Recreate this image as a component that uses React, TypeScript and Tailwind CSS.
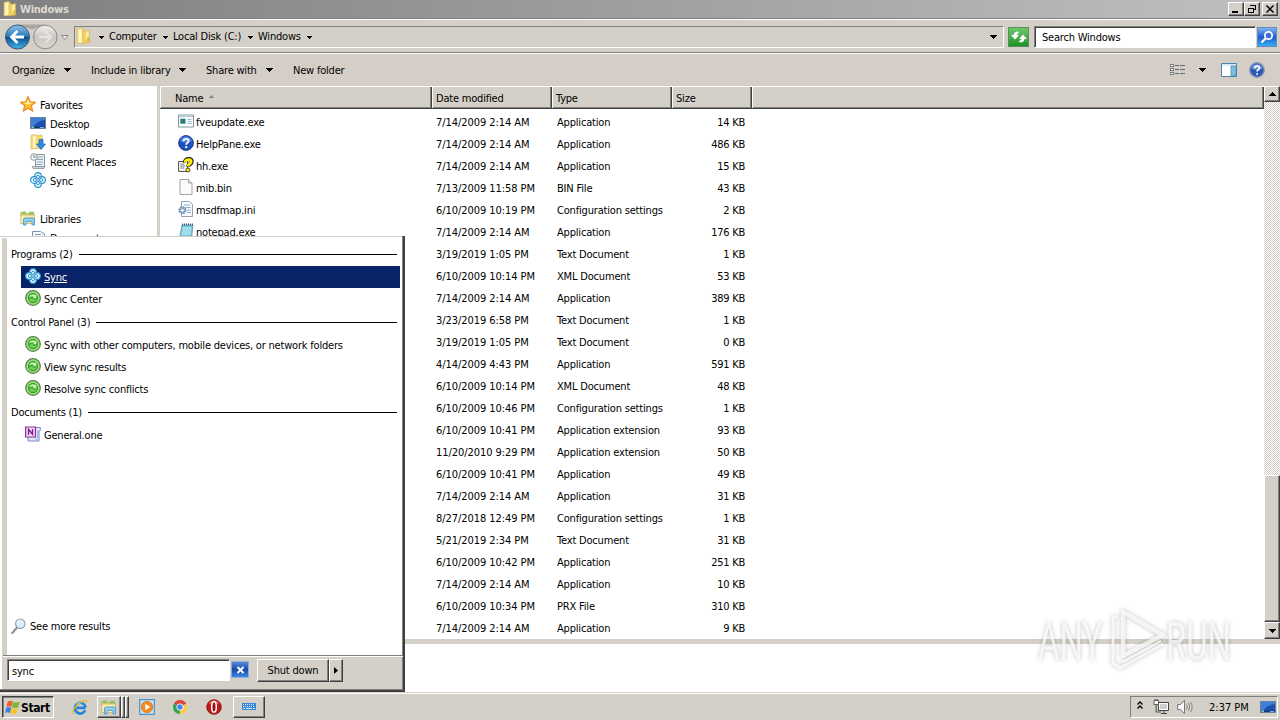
import React from 'react';
import clsx from 'clsx';

type IconProps = { className?: string };

const RAISED = 'border border-t-white border-l-white border-b-[#404040] border-r-[#404040] bg-[#d4d0c8] shadow-[inset_-1px_-1px_0_#808080]';
const SUNKEN = 'border border-t-[#808080] border-l-[#808080] border-b-white border-r-white';

const Caret = ({ className }: IconProps) => (
  <svg viewBox="0 0 7 4" className={clsx('shrink-0', className)} shapeRendering="crispEdges"><path d="M0 0h7L3.5 4z" fill="#000" /></svg>
);

const FolderIcon = ({ className }: IconProps) => (
  <svg viewBox="0 0 16 16" className={clsx('shrink-0', className)}>
    <path d="M2 1.500 6 .5l2 1V14l-6 1z" fill="#f7e38c" stroke="#d8b458" strokeWidth=".6" />
    <path d="M6.500 2.500h2.500l1 1 3.500-1V14l-7 1z" fill="#f0cf62" stroke="#d8b458" strokeWidth=".6" />
    <path d="M3.500 2v12.500l3-.5V1.500z" fill="#fff6c0" />
    <path d="m10 4 3-.5v7l-3 1z" fill="#fbeb9f" />
    <path d="M11.500 9h2.300v5h-2.300z" fill="#e3ba48" />
  </svg>
);

const StarIcon = ({ className }: IconProps) => (
  <svg viewBox="0 0 16 16" className={className}>
    <path d="m8 .8 2.100 4.900 5.300.5-4 3.500 1.200 5.300L8 12.200 3.400 15l1.200-5.300-4-3.500 5.300-.5z" fill="#ffc034" stroke="#e6861c" strokeWidth="1.100" />
    <path d="m8 3 1.300 3.500 3.500.4-4.800 1.600-4.500-1.600 3.200-.4z" fill="#ffec98" />
  </svg>
);

const DesktopIcon = ({ className }: IconProps) => (
  <svg viewBox="0 0 16 16" className={className}>
    <path d="M.5 2.500h15v11H.5z" fill="#1e4fae" stroke="#6a80a0" />
    <path d="M1 3h14v2Q7 6 3 12H1z" fill="#3f7fd8" />
    <path d="M1 11.500h14V13H1z" fill="#143878" />
    <path d="M1.500 11.500h2.500V13H1.500z" fill="#8fd0a0" />
    <path d="M10 12h4v.8h-4z" fill="#a8c8f0" />
  </svg>
);

const DownloadsIcon = ({ className }: IconProps) => (
  <svg viewBox="0 0 16 16" className={className}>
    <path d="M1 1.500 5 .5l2 1 5-.5v13L1 15z" fill="#f4da78" stroke="#dab860" strokeWidth=".7" />
    <path d="M3 2v12l2.500-.4V1.500z" fill="#fff6c4" />
    <path d="M9 5.500h4V10h2.500L11 15.500 6.500 10H9z" fill="#2f8be0" stroke="#1b5ea8" strokeWidth=".7" />
  </svg>
);

const RecentIcon = ({ className }: IconProps) => (
  <svg viewBox="0 0 16 16" className={className}>
    <path d="M5.500 1.500h9v12l-9 .5z" fill="#eef2f4" stroke="#8b969e" />
    <path d="M7 4h6M7 6.500h6M7 9h6M5 11.500h7" stroke="#7e98aa" strokeWidth=".9" />
    <path d="M2 13.500h13l-1 2H3z" fill="#c8d2d8" stroke="#7f8b92" strokeWidth=".7" />
    <circle cx="4" cy="4" r="3.300" fill="#f4f7f8" stroke="#8b969e" />
    <path d="M4 2v2.200h1.800" fill="none" stroke="#4c6478" strokeWidth=".8" />
  </svg>
);

const SyncIcon = ({ className }: IconProps) => (
  <svg viewBox="0 0 16 16" className={className}>
    <g fill="#d4f0fc" stroke="#2a8fcc" strokeWidth="1.100">
      <circle cx="8" cy="4" r="3.400" />
      <circle cx="8" cy="12" r="3.400" />
      <circle cx="4" cy="8" r="3.400" />
      <circle cx="12" cy="8" r="3.400" />
    </g>
    <path d="m8 3.500 4.500 4.500L8 12.500 3.500 8z" fill="#7cc8ee" />
    <g fill="#f4fcff" stroke="#2a8fcc" strokeWidth=".9">
      <circle cx="8" cy="4.900" r="1.500" />
      <circle cx="4.900" cy="8" r="1.500" />
      <circle cx="11.100" cy="8" r="1.500" />
      <circle cx="8" cy="11.100" r="1.500" />
    </g>
  </svg>
);

const LibrariesIcon = ({ className }: IconProps) => (
  <svg viewBox="0 0 16 16" className={className}>
    <path d="M.7 2.500h5l1 1H14V6H.7z" fill="#e9d27a" stroke="#bfa040" strokeWidth=".7" />
    <path d="M2 1.500h4v3H2zM9 1.700h5v3H9z" fill="#8cc870" />
    <path d="M.7 5h13.800v8.500H.7z" fill="#f9ecae" stroke="#cbb058" strokeWidth=".7" />
    <path d="M3.500 15V9.500q0-1.500 1.500-1.500h8q1.500 0 1.500 1.500V15H12v-2.500q0-1-1-1H7q-1 0-1 1V15z" fill="#8fd0ee" stroke="#3f93c4" strokeWidth=".8" />
  </svg>
);

const PageIcon = ({ className }: IconProps) => (
  <svg viewBox="0 0 16 16" className={className}>
    <path d="M2 .5h8.500L14 4v11.500H2z" fill="#fbfbfa" stroke="#9a9a9a" strokeWidth=".9" />
    <path d="M10.500.5V4H14" fill="#e4e4e4" stroke="#9a9a9a" strokeWidth=".9" />
  </svg>
);

const DocumentsIcon = ({ className }: IconProps) => (
  <svg viewBox="0 0 16 16" className={className}>
    <path d="M2.500 2.500h8L14.500 5v10h-12z" fill="#f6fafc" stroke="#7f93a0" />
    <path d="M5 5.500h6M5 8h8M5 10.500h8" stroke="#7ea4bc" />
  </svg>
);

const ExeIcon = ({ className }: IconProps) => (
  <svg viewBox="0 0 16 16" className={className}>
    <path d="M.5 2h15v12H.5z" fill="#fff" stroke="#7c98a4" />
    <path d="M1 2.500h14v1.700H1z" fill="#b8ccd4" />
    <path d="M2.300 5.700h5.200v5H2.300z" fill="#2f7c74" />
    <path d="M9.500 6.500h4M9.500 8.500h4M9.500 10.500h4" stroke="#8ab8e0" />
  </svg>
);

const HelpIcon = ({ className }: IconProps) => (
  <svg viewBox="0 0 16 16" className={className}>
    <circle cx="8" cy="8" r="7.400" fill="#1f50c0" stroke="#14357e" strokeWidth=".9" />
    <path d="M2 6a6.300 6.300 0 0 1 12 0Q8 9 2 6z" fill="#4c82e4" />
    <path d="M5.500 6.200C5.500 3.200 10.600 3 10.600 6c0 1.800-2.400 1.900-2.400 3.700" fill="none" stroke="#fff" strokeWidth="1.900" />
    <circle cx="8.200" cy="12.200" r="1.100" fill="#fff" />
  </svg>
);

const HelpButtonIcon = ({ className }: IconProps) => (
  <svg viewBox="0 0 16 16" className={className}>
    <circle cx="8" cy="8" r="7.200" fill="#2c58b4" stroke="#8494b8" strokeWidth="1.400" />
    <path d="M2.500 6.500a5.700 5.700 0 0 1 11 0Q8 9 2.500 6.500z" fill="#6c94dc" />
    <path d="M5.700 6.200C5.700 3.500 10.400 3.300 10.400 6c0 1.700-2.300 1.800-2.300 3.500" fill="none" stroke="#fff" strokeWidth="1.700" />
    <circle cx="8.100" cy="11.900" r="1" fill="#fff" />
  </svg>
);

const HhIcon = ({ className }: IconProps) => (
  <svg viewBox="0 0 16 16" className={className}>
    <path d="M.6 4.500h9v9.900h-9z" fill="#fff" stroke="#333" strokeWidth=".9" />
    <path d="M2.300 7h4M2.300 9h5M2.300 11h4" stroke="#555" strokeWidth=".8" />
    <path d="M7 5.500C6.500 1.800 13.500.5 13.700 4.500c0 2.700-3.400 2.500-3.600 5.200" fill="none" stroke="#222" strokeWidth="4.200" />
    <path d="M7.200 5.300C7 2.500 13 1.200 13.200 4.500c0 2.500-3.100 2.300-3.200 4.800" fill="none" stroke="#fff000" strokeWidth="2.800" />
    <circle cx="9.900" cy="13" r="2" fill="#fff000" stroke="#222" strokeWidth=".8" />
  </svg>
);

const IniIcon = ({ className }: IconProps) => (
  <svg viewBox="0 0 16 16" className={className}>
    <path d="M3.500.5h8L14.500 3.500v12h-11z" fill="#f7fafd" stroke="#8a98ac" strokeWidth=".9" />
    <path d="M6 4h6M6 6.500h7M9 9h4M9 11.500h4" stroke="#8fa9cc" strokeWidth=".9" />
    <circle cx="4.400" cy="9.300" r="3.200" fill="#d4e4f4" stroke="#5f86b8" strokeWidth="1.800" strokeDasharray="1.500 1" />
    <circle cx="4.400" cy="9.300" r="2" fill="#fff" stroke="#5f86b8" strokeWidth="1" />
  </svg>
);

const NotepadIcon = ({ className }: IconProps) => (
  <svg viewBox="0 0 16 16" className={className}>
    <path d="M4 2h11l-1.500 13.500h-12z" fill="#7cc8da" stroke="#4f9cb0" strokeWidth=".8" />
    <path d="M5 4h8.500l-1 8H3.500z" fill="#a4dcea" />
    <path d="M4 1.500h11" stroke="#556" strokeWidth="1.800" strokeDasharray="1 1" />
  </svg>
);

const SyncCenterIcon = ({ className }: IconProps) => (
  <svg viewBox="0 0 16 16" className={className}>
    <circle cx="8" cy="8" r="7.300" fill="#3faa34" stroke="#567c50" strokeWidth="1.200" />
    <circle cx="8" cy="8" r="5.900" fill="#38a030" stroke="#a4e080" strokeWidth="1.500" />
    <path d="M4 7.500C4.800 4.300 8 3.500 10 5l1.300-1 .2 4.200H7.700L8.800 7C7.200 6.200 5.700 6.500 4 7.500z" fill="#c8f4ac" />
    <path d="M12 8.700c-.8 3.200-4 4-6 2.500L4.700 12.200l-.2-3.900h3.800L7.200 9.300c1.600.8 3.100.4 4.800-.6z" fill="#78cc58" />
  </svg>
);

const OneNoteIcon = ({ className }: IconProps) => (
  <svg viewBox="0 0 16 16" className={className}>
    <path d="M6 1.500h9.300v3l-1.300 1v9.500H3V9z" fill="#dce6f8" stroke="#6f7fc0" strokeWidth=".9" />
    <path d="M12.500 4v8M10 13h3" stroke="#9fb4e0" />
    <path d="M.6 1h9.800v10H.6z" fill="#f4e6f6" stroke="#8c2a98" strokeWidth="1.200" />
    <path d="M3.500 9V3.300l4 5V3" fill="none" stroke="#7c1a8c" strokeWidth="1.400" />
  </svg>
);

const MagnifierIcon = ({ className }: IconProps) => (
  <svg viewBox="0 0 16 16" className={className}>
    <path d="m6 9.500-4.800 5.700" stroke="#8c8c90" strokeWidth="2" strokeLinecap="round" />
    <circle cx="9.300" cy="5.700" r="4.700" fill="#dceefc" stroke="#8c9cac" strokeWidth="1.100" />
    <path d="M6.500 5a3 3 0 0 1 3-2.500" fill="none" stroke="#fff" strokeWidth="1.200" />
  </svg>
);

const WindowsFlag = ({ className }: IconProps) => (
  <svg viewBox="0 0 16 16" className={className}>
    <path d="M3 1.500q3-1.500 5.300 0L6.900 7.300q-2.500-1.500-5.400 0z" fill="#e8602c" />
    <path d="M8.800 1.900q2.500 1.700 7 0l-1.700 5.800q-3.700 1.500-6.700 0z" fill="#7cb83c" />
    <path d="M1.300 8.100q2.900-1.400 5.400 0l-1.500 5.900q-2.500-1.700-5.200 0z" fill="#3c84d8" />
    <path d="M7.200 8.500q3 1.500 6.700 0l-1.700 5.700q-3.700 1.500-6.500 0z" fill="#f8c428" />
  </svg>
);

const IeIcon = ({ className }: IconProps) => (
  <svg viewBox="0 0 16 16" className={className}>
    <path d="M13.500 8.800H4.500M13.200 11.300A5.400 5.400 0 1 1 13.600 8.500" fill="none" stroke="#2384d8" strokeWidth="2.700" />
    <path d="M4.500 5.500a5 5 0 0 1 6-1.500" stroke="#7cd0f8" fill="none" strokeWidth="1.200" />
    <path d="M1.700 14.800C-.8 12.500 4 6 8.500 3.200 12 1 15.500.4 14.500 3.800" fill="none" stroke="#e8b820" strokeWidth="1.300" />
  </svg>
);

const MediaIcon = ({ className }: IconProps) => (
  <svg viewBox="0 0 16 16" className={className}>
    <path d="M.7.7h14.600v14.600H.7z" fill="#c9e3f6" stroke="#4a92c8" strokeWidth="1.200" />
    <circle cx="8" cy="8" r="5.600" fill="#f58a1c" stroke="#d86c10" strokeWidth=".8" />
    <path d="m6.300 4.700 5 3.300-5 3.300z" fill="#fff" />
  </svg>
);

const ChromeIcon = ({ className }: IconProps) => (
  <svg viewBox="0 0 16 16" className={className}>
    <path d="M8 8 1.900 4.500A7 7 0 0 1 14.300 4.800z" fill="#dc4436" />
    <path d="M8 8 14.300 4.800A7 7 0 0 1 7.700 15z" fill="#fccc3c" />
    <path d="M8 8l-.3 7A7 7 0 0 1 1.900 4.500z" fill="#30a454" />
    <circle cx="8" cy="8" r="3.500" fill="#fff" />
    <circle cx="8" cy="8" r="2.700" fill="#4484f0" />
  </svg>
);

const OperaIcon = ({ className }: IconProps) => (
  <svg viewBox="0 0 16 16" className={className}>
    <circle cx="8" cy="8" r="7.300" fill="#c01818" stroke="#7c0c0c" strokeWidth=".8" />
    <path d="M2.500 5Q4 1.600 8 1.500T13.500 5Q8 3 2.500 5z" fill="#ec6a60" />
    <ellipse cx="8" cy="8" rx="2.300" ry="5.200" fill="#a01010" stroke="#fff" strokeWidth="1.500" />
  </svg>
);

const KeyboardIcon = ({ className }: IconProps) => (
  <svg viewBox="0 0 16 10" className={className} shapeRendering="crispEdges">
    <path d="M1 1h14v7H1z" fill="#3888d8" />
    <path d="M2 2.500h12M2 4.500h12" stroke="#d4e8fa" strokeDasharray="1 1" />
    <path d="M2 6.500h2M5 6.500h6M12 6.500h2" stroke="#d4e8fa" />
  </svg>
);

const NetworkIcon = ({ className }: IconProps) => (
  <svg viewBox="0 0 16 16" className={className}>
    <path d="M5.500 3.500h10v8h-10z" fill="#cfcfcf" stroke="#444" />
    <path d="M6.500 4.500h8v6h-8z" fill="none" stroke="#fff" />
    <path d="M8 14.500h6M11 12v2.500" stroke="#444" />
    <path d="M1 1.500h4.500v4H1z" fill="#fff" stroke="#555" strokeWidth=".9" />
    <path d="M2.200 0v2M4.200 0v2M3.200 5.500v7.500H8" fill="none" stroke="#555" strokeWidth="1.100" />
  </svg>
);

const SpeakerIcon = ({ className }: IconProps) => (
  <svg viewBox="0 0 16 16" className={className}>
    <path d="M.6 5.500h2.700L7.500 1.500v13l-4.200-4H.6z" fill="#fafafa" stroke="#6c6c6c" strokeWidth=".9" />
    <path d="M9.500 5.500q1.500 2.500 0 5M11.500 4q2.500 4 0 8M13.500 2.800q3.300 5.200 0 10.400" fill="none" stroke="#808080" strokeWidth=".9" />
  </svg>
);

const favorites = [
  { label: 'Desktop', Icon: DesktopIcon },
  { label: 'Downloads', Icon: DownloadsIcon },
  { label: 'Recent Places', Icon: RecentIcon },
  { label: 'Sync', Icon: SyncIcon },
];

const files = [
  { name: 'fveupdate.exe', Icon: ExeIcon, date: '7/14/2009 2:14 AM', type: 'Application', size: '14 KB' },
  { name: 'HelpPane.exe', Icon: HelpIcon, date: '7/14/2009 2:14 AM', type: 'Application', size: '486 KB' },
  { name: 'hh.exe', Icon: HhIcon, date: '7/14/2009 2:14 AM', type: 'Application', size: '15 KB' },
  { name: 'mib.bin', Icon: PageIcon, date: '7/13/2009 11:58 PM', type: 'BIN File', size: '43 KB' },
  { name: 'msdfmap.ini', Icon: IniIcon, date: '6/10/2009 10:19 PM', type: 'Configuration settings', size: '2 KB' },
  { name: 'notepad.exe', Icon: NotepadIcon, date: '7/14/2009 2:14 AM', type: 'Application', size: '176 KB' },
  { date: '3/19/2019 1:05 PM', type: 'Text Document', size: '1 KB' },
  { date: '6/10/2009 10:14 PM', type: 'XML Document', size: '53 KB' },
  { date: '7/14/2009 2:14 AM', type: 'Application', size: '389 KB' },
  { date: '3/23/2019 6:58 PM', type: 'Text Document', size: '1 KB' },
  { date: '3/19/2019 1:05 PM', type: 'Text Document', size: '0 KB' },
  { date: '4/14/2009 4:43 PM', type: 'Application', size: '591 KB' },
  { date: '6/10/2009 10:14 PM', type: 'XML Document', size: '48 KB' },
  { date: '6/10/2009 10:46 PM', type: 'Configuration settings', size: '1 KB' },
  { date: '6/10/2009 10:41 PM', type: 'Application extension', size: '93 KB' },
  { date: '11/20/2010 9:29 PM', type: 'Application extension', size: '50 KB' },
  { date: '6/10/2009 10:41 PM', type: 'Application', size: '49 KB' },
  { date: '7/14/2009 2:14 AM', type: 'Application', size: '31 KB' },
  { date: '8/27/2018 12:49 PM', type: 'Configuration settings', size: '1 KB' },
  { date: '5/21/2019 2:34 PM', type: 'Text Document', size: '31 KB' },
  { date: '6/10/2009 10:42 PM', type: 'Application', size: '251 KB' },
  { date: '7/14/2009 2:14 AM', type: 'Application', size: '10 KB' },
  { date: '6/10/2009 10:34 PM', type: 'PRX File', size: '310 KB' },
  { date: '7/14/2009 2:14 AM', type: 'Application', size: '9 KB' },
];

const results = [
  {
    title: 'Programs (2)',
    items: [
      { label: 'Sync', Icon: SyncIcon, selected: true },
      { label: 'Sync Center', Icon: SyncCenterIcon },
    ],
  },
  {
    title: 'Control Panel (3)',
    items: [
      { label: 'Sync with other computers, mobile devices, or network folders', Icon: SyncCenterIcon },
      { label: 'View sync results', Icon: SyncCenterIcon },
      { label: 'Resolve sync conflicts', Icon: SyncCenterIcon },
    ],
  },
  { title: 'Documents (1)', items: [{ label: 'General.one', Icon: OneNoteIcon }] },
];

const TitleBar = () => (
  <div className="flex h-[18px] shrink-0 items-center bg-linear-to-r from-[#808080] to-[#c0c0c0] pl-[2px] pr-[2px]">
    <FolderIcon className="h-4 w-4" />
    <span className="ml-[2px] pt-[2px] font-bold tracking-[-0.25px] text-[#dedad2]">Windows</span>
    <div className="ml-auto flex">
      <button className={clsx('flex h-[14px] w-4 items-end pb-[2px] pl-[3px]', RAISED)}><span className="h-[2px] w-[6px] bg-black" /></button>
      <button className={clsx('flex h-[14px] w-4 items-center justify-center', RAISED)}>
        <svg viewBox="0 0 10 10" className="h-[10px] w-[10px]" shapeRendering="crispEdges">
          <path d="M3.500 1.500h5v4h-2M3 1h6M1.500 4.500h5v4h-5zM1 4h6" fill="none" stroke="#000" />
        </svg>
      </button>
      <button className={clsx('ml-[2px] flex h-[14px] w-4 items-center justify-center', RAISED)}>
        <svg viewBox="0 0 8 8" className="h-2 w-2"><path d="m.5.5 7 7m0-7-7 7" stroke="#000" strokeWidth="1.500" /></svg>
      </button>
    </div>
  </div>
);

const AddressBar = () => (
  <div className="flex h-9 shrink-0 items-center border-y border-b-white border-t-[#808080] pl-1 pr-[2px] pt-[2px] shadow-[inset_0_1px_0_white,inset_0_-1px_0_#808080]">
    <svg viewBox="0 0 68 28" className="h-7 w-[68px] shrink-0">
      <defs>
        <linearGradient id="back" x2="0" y2="1">
          <stop offset="0" stopColor="#8fc4ea" />
          <stop offset=".48" stopColor="#2a78b8" />
          <stop offset=".5" stopColor="#0b4c8c" />
          <stop offset="1" stopColor="#3fb4ec" />
        </linearGradient>
        <linearGradient id="forward" x2="0" y2="1">
          <stop offset="0" stopColor="#f2f0ee" />
          <stop offset=".5" stopColor="#c9c6c2" />
          <stop offset="1" stopColor="#dddad6" />
        </linearGradient>
      </defs>
      <path d="M13 1.500h29q-14 5-14 5t-15-5z" fill="#aaa7a2" />
      <circle cx="13.500" cy="14" r="12" fill="url(#back)" stroke="#3c5878" />
      <path d="M13.500 8 7.500 14l6 6M8 14h12" fill="none" stroke="#fff" strokeWidth="2.800" />
      <circle cx="41.300" cy="14" r="11.800" fill="url(#forward)" stroke="#8c8a88" />
      <path d="m41.500 8.500 5.500 5.500-5.500 5.500M46 14H35" fill="none" stroke="#e6e4e2" strokeWidth="2.400" />
      <path d="M57.500 12.500h6.500l-3.200 4z" fill="#f4f2f0" stroke="#807e7a" strokeWidth=".9" />
    </svg>
    <div className={clsx('ml-[2px] flex h-[22px] flex-1 items-center', SUNKEN)}>
      <FolderIcon className="mb-[2px] h-[18px] w-[17px]" />
      <Caret className="mr-[5px] ml-[7px] h-[3px] w-[5px]" />
      <span className="w-[54px]">Computer</span>
      <Caret className="mr-[5px] h-[3px] w-[5px]" />
      <span className="w-[75px]">Local Disk (C:)</span>
      <Caret className="mr-[5px] h-[3px] w-[5px]" />
      <span className="w-[49px]">Windows</span>
      <Caret className="h-[3px] w-[5px]" />
      <Caret className="ml-auto mr-[6px] h-1 w-[7px]" />
    </div>
    <button className="ml-1 flex h-5 w-[21px] items-center justify-center border border-[#5c8c5c] bg-linear-to-b from-[#6cc86c] to-[#149424]">
      <svg viewBox="0 0 18 14" className="h-[14px] w-[18px]" fill="#fff">
        <path d="M8.500 1.500Q4 1.500 3.500 5H1l4 4.500L9 5H6.500q.3-1.500 2-1.500z" />
        <path d="M9.500 12.500Q14 12.500 14.500 9H17l-4-4.500L9 9h2.500q-.3 1.500-2 1.500z" />
      </svg>
    </button>
    <div className="ml-[5px] flex h-[22px] w-[222px] items-center border border-b-white border-l-[#808080] border-r-white border-t-[#808080] bg-white pl-[7px] shadow-[inset_1px_1px_0_#404040]">
      <span className="pt-[1px]">Search Windows</span>
    </div>
    <button className="ml-px mr-px flex h-5 w-5 items-center justify-center border border-[#6c8cc0] bg-linear-to-b from-[#7cb4f0] via-[#2858d0] to-[#30b0f0]">
      <svg viewBox="0 0 14 14" className="h-[14px] w-[14px]">
        <path d="m5.500 8.500-4 4" stroke="#fff" strokeWidth="2.200" />
        <circle cx="8.500" cy="5.500" r="3.700" fill="#3c70dc" stroke="#fff" strokeWidth="1.700" />
      </svg>
    </button>
  </div>
);

const Toolbar = () => (
  <div className="flex h-8 shrink-0 items-center bg-[#d4cec6] pl-3 pr-[15px]">
    <span className="w-[52px] pt-[2px]">Organize</span>
    <Caret className="mr-5 h-1 w-[7px]" />
    <span className="w-[88px] pt-[2px]">Include in library</span>
    <Caret className="mr-5 h-1 w-[7px]" />
    <span className="w-[60px] pt-[2px]">Share with</span>
    <Caret className="mr-5 h-1 w-[7px]" />
    <span className="pt-[2px]">New folder</span>
    <svg viewBox="0 0 16 14" className="ml-auto h-[14px] w-4" shapeRendering="crispEdges">
      <path d="M.5 1.500h3v2h-3zM.5 5.500h3v2h-3zM.5 9.500h3v2h-3z" fill="#fff" stroke="#7c7c7c" />
      <path d="M5 2.500h4M10 2.500h5M5 6.500h4M10 6.500h5M5 10.500h4M10 10.500h5" stroke="#5c6c84" />
    </svg>
    <Caret className="ml-[13px] h-1 w-[7px]" />
    <svg viewBox="0 0 16 14" className="ml-[15px] h-[14px] w-4">
      <path d="M.5.500h15v13H.5z" fill="#fff" stroke="#4c84a8" />
      <path d="M1 1h14v2H1z" fill="#d8ecf8" />
      <path d="M10 3h5v10h-5z" fill="#7cc0e0" stroke="#4c84a8" strokeWidth=".7" />
    </svg>
    <HelpButtonIcon className="ml-3 h-4 w-4" />
  </div>
);

const Sidebar = () => (
  <div className="w-[157px] shrink-0 overflow-hidden bg-white pt-[9px]">
    <div className="flex h-[19px] items-center pl-5 pt-[2px]"><StarIcon className="mb-1 mr-1 h-4 w-4" />Favorites</div>
    {favorites.map(({ label, Icon }) => (
      <div key={label} className="flex h-[19px] items-center pl-[30px] pt-[2px]"><Icon className="mb-1 mr-1 h-4 w-4" />{label}</div>
    ))}
    <div className="mt-[19px] flex h-[19px] items-center pl-5 pt-[2px]"><LibrariesIcon className="mb-1 mr-1 h-4 w-4" />Libraries</div>
    <div className="flex h-[19px] items-center pl-[30px] pt-[2px]"><DocumentsIcon className="mb-1 mr-1 h-4 w-4" />Documents</div>
  </div>
);

const HEADER_CELL = 'flex items-center border-r border-[#404040] pt-[2px] shadow-[inset_-1px_0_0_#808080,inset_1px_0_0_white]';

const FileList = () => (
  <div className="flex min-w-0 flex-1 flex-col bg-white">
    <div className="flex h-[23px] shrink-0 border-b border-t border-b-[#404040] border-t-white bg-[#d4d0c8] shadow-[inset_0_-1px_0_#808080]">
      <div className={clsx('w-[272px] pl-[15px]', HEADER_CELL)}>
        Name
        <svg viewBox="0 0 5 3" className="mb-1 ml-[6px] h-[3px] w-[5px]"><path d="M0 3h5L2.500 0z" fill="#808080" /></svg>
      </div>
      <div className={clsx('w-[120px] pl-1', HEADER_CELL)}>Date modified</div>
      <div className={clsx('w-[120px] pl-1', HEADER_CELL)}>Type</div>
      <div className={clsx('w-[80px] pl-1', HEADER_CELL)}>Size</div>
      <div className={clsx('flex-1', HEADER_CELL)} />
    </div>
    <div className="pt-[2px]">
      {files.map(({ name, Icon, date, type, size }, i) => (
        <div key={i} className="flex h-[22px] items-center pt-[2px]">
          <div className="flex w-[276px] items-center pl-[18px]">
            {Icon && <Icon className="mb-1 mr-[2px] h-4 w-4" />}
            {name}
          </div>
          <div className="w-[120px] tracking-[-0.06px]">{date}</div>
          <div className="w-[120px] pl-px tracking-[-0.18px]">{type}</div>
          <div className="w-[69px] text-right tracking-[-0.25px]">{size}</div>
        </div>
      ))}
    </div>
  </div>
);

const ScrollBar = () => (
  <div className="flex w-4 shrink-0 flex-col bg-[repeating-conic-gradient(#ffffff_0_25%,#d4d0c8_0_50%)] bg-size-[2px_2px]">
    <button className={clsx('flex h-4 items-center justify-center', RAISED)}><Caret className="h-1 w-[7px] rotate-180" /></button>
    <div className={clsx('mt-[373px] h-[147px]', RAISED)} />
    <button className={clsx('flex h-[17px] items-center justify-center', RAISED)}><Caret className="h-1 w-[7px]" /></button>
  </div>
);

const StartMenu = () => (
  <div className="absolute left-0 top-[236px] flex h-[456px] w-[405px] flex-col border-b-2 border-r-2 border-[#404040] bg-[#d4d0c8] pl-[3px] pt-[2px] shadow-[inset_-1px_-1px_0_#808080,inset_0_1px_0_#d4d0c8,inset_2px_2px_0_white]">
    <div className="ml-1 mr-px flex h-[417px] flex-col bg-white pt-1">
      {results.map(section => (
        <React.Fragment key={section.title}>
          <div className="flex h-6 items-center pl-1 pr-[5px]">
            <span className="mr-[6px] pt-[2px]">{section.title}</span>
            <span className="h-px flex-1 bg-black" />
          </div>
          {section.items.map(({ label, Icon, ...item }) => {
            const selected = 'selected' in item;
            return (
              <div key={label} className={clsx('ml-[14px] mr-[2px] flex h-[22px] items-center pl-1 pt-[2px]', selected && 'bg-[#0a246a] text-white')}>
                <Icon className="mb-1 mr-[3px] h-4 w-4" />
                <span className={clsx(selected && 'underline')}>{label}</span>
              </div>
            );
          })}
        </React.Fragment>
      ))}
      <div className="mb-[18px] mt-auto flex h-[22px] items-center pl-1 pt-[2px]"><MagnifierIcon className="mb-[2px] mr-[3px] h-4 w-4" />See more results</div>
    </div>
    <div className="flex h-[34px] items-start border-t border-[#808080] pl-1 pt-[3px] shadow-[inset_0_1px_0_white]">
      <div className="flex h-[22px] w-[223px] items-center border border-b-white border-l-[#808080] border-r-white border-t-[#808080] bg-white pl-1 pt-[3px] shadow-[inset_1px_1px_0_#404040]">sync</div>
      <button className="ml-px mt-[2px] flex h-[17px] w-[18px] items-center justify-center border border-[#8cacdc] bg-linear-to-b from-[#5c8cd8] via-[#1c48a8] to-[#3c8ce0]">
        <svg viewBox="0 0 8 8" className="h-2 w-[9px]"><path d="m1 1 6 6m0-6-6 6" stroke="#fff" strokeWidth="1.900" /></svg>
      </button>
      <div className="ml-2 flex h-[23px]">
        <button className={clsx('flex w-[72px] items-center justify-center', RAISED)}>Shut down</button>
        <button className={clsx('flex w-[14px] items-center justify-center', RAISED)}>
          <svg viewBox="0 0 4 7" className="h-[7px] w-1"><path d="M0 0v7l4-3.500z" /></svg>
        </button>
      </div>
    </div>
  </div>
);

const TaskBar = () => (
  <div className="flex h-7 shrink-0 items-center border-t border-[#d4d0c8] bg-[#d4d0c8] pl-[2px] pr-[2px] pt-px shadow-[inset_0_1px_0_white]">
    <button className="flex h-[22px] w-[52px] items-center border border-b-white border-l-[#404040] border-r-white border-t-[#404040] pl-[2px] shadow-[inset_1px_1px_0_#808080]">
      <WindowsFlag className="h-[15px] w-[15px]" />
      <span className="ml-px pt-px text-[12px] font-bold tracking-[-0.4px]">Start</span>
    </button>
    <IeIcon className="ml-[18px] h-4 w-4" />
    <div className="ml-[9px] flex h-[22px]">
      <button className={clsx('flex w-6 items-center justify-center', RAISED)}><LibrariesIcon className="h-4 w-4" /></button>
      <span className={clsx('w-1', RAISED)} />
      <span className={clsx('w-1', RAISED)} />
    </div>
    <MediaIcon className="ml-[10px] h-4 w-4" />
    <ChromeIcon className="ml-[17px] h-4 w-4" />
    <OperaIcon className="ml-[18px] h-4 w-4" />
    <button className={clsx('ml-[11px] flex h-[22px] w-8 items-center justify-center', RAISED)}><KeyboardIcon className="h-[10px] w-4" /></button>
    <div className={clsx('ml-auto flex h-[22px] w-[148px] items-center pl-[6px]', SUNKEN)}>
      <svg viewBox="0 0 6 8" className="mb-1 h-2 w-[6px]" fill="none" stroke="#000" strokeWidth="1.300"><path d="m.5 3.500 2.500-2.500 2.500 2.500M.5 7.500 3 5l2.500 2.500" /></svg>
      <NetworkIcon className="ml-[10px] h-4 w-4" />
      <SpeakerIcon className="ml-2 h-4 w-4" />
      <span className="ml-4 w-[51px] whitespace-nowrap pt-px tracking-[0px]">2:37 PM</span>
      <DesktopIcon className="h-4 w-4" />
    </div>
  </div>
);

const Watermark = () => (
  <div className="absolute left-[1038px] top-[608px] flex h-16 w-[196px] items-center font-['Roboto'] text-[53px] font-normal leading-none tracking-normal text-white/75 drop-shadow-[0_0_2px_rgba(0,0,0,0.32)]">
    <span className="w-[66px] origin-left scale-x-[0.62] pt-1">ANY</span>
    <svg viewBox="0 0 62 64" className="h-16 w-[62px] shrink-0 overflow-visible" fill="none" stroke="currentColor" strokeWidth="4.500" strokeLinejoin="round">
      <path d="M19 4v44l40-21z" />
      <path d="M13 9H9v46l7 5 43-24" strokeWidth="3" />
      <path d="m19 54 38-21" strokeWidth="3" />
    </svg>
    <span className="w-[66px] origin-left scale-x-[0.62] pt-1">RUN</span>
  </div>
);

export default function App() {
  return (
    <div className="relative flex h-[720px] w-[1280px] flex-col overflow-hidden bg-[#d4d0c8] font-['DejaVu_Sans_Condensed','DejaVu_Sans',sans-serif] text-[11px] leading-[14px] tracking-[-0.2px] text-black">
      <TitleBar />
      <AddressBar />
      <Toolbar />
      <div className="flex h-[553px] shrink-0">
        <Sidebar />
        <div className="w-[3px] shrink-0 bg-[#d4d0c8]" />
        <FileList />
        <ScrollBar />
      </div>
      <div className="h-[5px] shrink-0 bg-[#d4d0c8]" />
      <div className="flex-1 bg-white" />
      <TaskBar />
      <StartMenu />
      <Watermark />
    </div>
  );
}
